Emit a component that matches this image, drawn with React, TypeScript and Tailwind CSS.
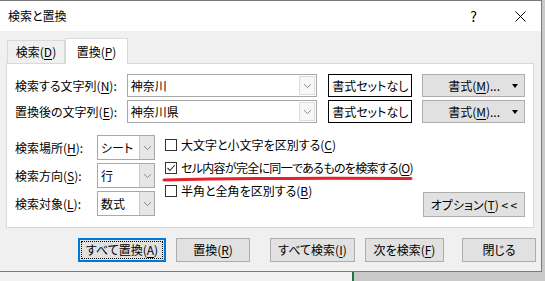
import type { ReactNode } from 'react'

// 検索と置換 dialog (Excel, Windows 10 look)

function U({ children }: { children: ReactNode }) {
  return <span className="underline underline-offset-[2px] decoration-1">{children}</span>
}

function Chevron() {
  return (
    <svg width="9" height="6" viewBox="0 0 9 6" className="text-[#8a8a8a]">
      <path d="M1 1.2 L4.5 4.6 L8 1.2" fill="none" stroke="currentColor" strokeWidth="1" />
    </svg>
  )
}

function Combo({ value }: { value: string }) {
  return (
    <div className="flex h-[23px] w-[191px] items-center border border-[#a8a8a8] bg-white">
      <span className="flex-1 pl-[3px] text-[12px]">{value}</span>
      <div className="mr-[1px] flex h-[19px] w-[16px] items-center justify-center border border-[#dcdcdc] bg-[#f7f7f7]">
        <Chevron />
      </div>
    </div>
  )
}

function Select({ value }: { value: string }) {
  return (
    <div className="flex h-[25px] w-[58px] items-center border border-[#a8a8a8] bg-white">
      <span className="flex-1 whitespace-nowrap pl-[3px] text-[12px]">{value}</span>
      <div className="flex h-full w-[15px] items-center justify-center border-l border-[#c8c8c8] bg-[#e6e6e6]">
        <Chevron />
      </div>
    </div>
  )
}

function Check({ checked, tight, children }: { checked?: boolean; tight?: boolean; children: ReactNode }) {
  return (
    <div className="flex h-[23px] items-center gap-[4px]">
      <div className="flex h-[12px] w-[12px] items-center justify-center border border-[#333] bg-white">
        {checked && (
          <svg width="10" height="10" viewBox="0 0 10 10">
            <path d="M1.5 5 L4 7.5 L8.8 2" fill="none" stroke="#333" strokeWidth="1.1" />
          </svg>
        )}
      </div>
      <span className={['whitespace-nowrap text-[12px]', tight ? 'tracking-[-0.7px]' : ''].join(' ')}>
        {children}
      </span>
    </div>
  )
}

function Btn({ w, ml, children, focus }: { w: string; ml: string; children: ReactNode; focus?: boolean }) {
  return (
    <div
      className={[
        'flex h-[24px] items-center justify-center whitespace-nowrap text-[12px]',
        w,
        ml,
        focus ? 'border-2 border-[#0078d7] bg-[#e1e1e1] p-[1px]' : 'border border-[#adadad] bg-[#e1e1e1]',
      ].join(' ')}
    >
      {focus ? (
        <div className="flex h-full w-full items-center justify-center border border-dotted border-black">
          {children}
        </div>
      ) : (
        children
      )}
    </div>
  )
}

function FormatButton() {
  return (
    <div className="relative ml-[10px] flex h-[23px] w-[103px] items-center justify-center border border-[#adadad] bg-[#e1e1e1] text-[12px]">
      <span className="pl-[1px]">
        書式(<U>M</U>)...
      </span>
      <span className="absolute right-[6px] top-[9px] h-0 w-0 border-x-[3px] border-t-[4px] border-x-transparent border-t-black" />
    </div>
  )
}

function NoFormat() {
  return (
    <div className="ml-[11px] flex h-[23px] w-[84px] items-center justify-center whitespace-nowrap border border-black text-[12px]">
      書式セットなし
    </div>
  )
}

export default function App() {
  return (
    <div className="relative h-[281px] w-[545px] overflow-hidden bg-[#c9c9c9] font-['Noto_Sans_CJK_JP','Liberation_Sans',sans-serif] text-black [font-feature-settings:'palt']">
      <div className="flex">
        {/* dialog window */}
        <div className="flex h-[272px] w-[542px] flex-col border border-l-0 border-[#7a7a7a] bg-[#f0f0f0]">
          {/* title bar */}
          <div className="flex h-[30px] items-center bg-white">
            <span className="ml-[8px] text-[12px]">検索と置換</span>
            <span className="ml-auto mr-[38px] text-[14px]">?</span>
            <svg width="11" height="11" viewBox="0 0 11 11" className="mr-[15px]">
              <path d="M0.5 0.5 L10.5 10.5 M10.5 0.5 L0.5 10.5" stroke="#000" strokeWidth="1" />
            </svg>
          </div>

          {/* tabs */}
          <div className="mt-[7px] flex h-[25px] items-end pl-[7px]">
            <div className="flex h-[23px] w-[58px] items-center justify-center border border-b-0 border-[#d9d9d9] text-[12px]">
              検索(<U>D</U>)
            </div>
            <div className="relative z-10 -mb-[1px] flex h-[26px] w-[63px] items-center justify-center border border-b-0 border-[#d9d9d9] bg-white text-[12px]">
              置換(<U>P</U>)
            </div>
          </div>

          {/* tab panel */}
          <div className="relative ml-[6px] h-[165px] w-[528px] border border-[#d9d9d9] bg-white px-[8px] pt-[10px]">
            <div className="flex h-[23px] items-center">
              <span className="w-[112px] whitespace-nowrap text-[12px]">
                検索する文字列(<U>N</U>):
              </span>
              <Combo value="神奈川" />
              <NoFormat />
              <FormatButton />
            </div>
            <div className="mt-[3px] flex h-[23px] items-center">
              <span className="w-[112px] whitespace-nowrap text-[12px]">
                置換後の文字列(<U>E</U>):
              </span>
              <Combo value="神奈川県" />
              <NoFormat />
              <FormatButton />
            </div>

            <div className="mt-[12px] grid grid-cols-[82px_58px_minmax(0,1fr)_102px] grid-rows-[25px_25px_25px] gap-y-[3px]">
              <span className="col-start-1 row-start-1 self-center text-[12px]">
                検索場所(<U>H</U>):
              </span>
              <div className="col-start-2 row-start-1">
                <Select value="シート" />
              </div>
              <span className="col-start-1 row-start-2 self-center text-[12px]">
                検索方向(<U>S</U>):
              </span>
              <div className="col-start-2 row-start-2">
                <Select value="行" />
              </div>
              <span className="col-start-1 row-start-3 self-center text-[12px]">
                検索対象(<U>L</U>):
              </span>
              <div className="col-start-2 row-start-3">
                <Select value="数式" />
              </div>

              <div className="col-start-3 row-span-3 row-start-1 -mt-[2px] ml-[10px]">
                <Check>
                  大文字と小文字を区別する(<U>C</U>)
                </Check>
                <Check checked tight>
                  セル内容が完全に同一であるものを検索する(<U>O</U>)
                </Check>
                <Check>
                  半角と全角を区別する(<U>B</U>)
                </Check>
              </div>

              <div className="col-start-4 row-start-3 mt-[1px] flex h-[25px] items-center justify-center whitespace-nowrap border border-[#adadad] bg-[#e1e1e1] text-[12px]">
                オプション(<U>T</U>)&nbsp;&lt;&thinsp;&lt;
              </div>
            </div>

            {/* red annotation underline */}
            <svg
              className="absolute left-[155px] top-[112px]"
              width="252"
              height="6"
              viewBox="0 0 252 6"
            >
              <path d="M2 4 Q 60 2.6 125 2.4 T 249 2.6" fill="none" stroke="#e8202a" strokeWidth="3" strokeLinecap="round" />
            </svg>
          </div>

          {/* bottom buttons */}
          <div className="mt-[10px] flex">
            <Btn w="w-[88px]" ml="ml-[78px]" focus>
              すべて置換(<U>A</U>)
            </Btn>
            <Btn w="w-[74px]" ml="ml-[10px]">
              置換(<U>R</U>)
            </Btn>
            <Btn w="w-[85px]" ml="ml-[20px]">
              すべて検索(<U>I</U>)
            </Btn>
            <Btn w="w-[79px]" ml="ml-[10px]">
              次を検索(<U>F</U>)
            </Btn>
            <Btn w="w-[74px]" ml="ml-[18px]">
              閉じる
            </Btn>
          </div>
        </div>
      </div>

      {/* area behind the dialog */}
      <div className="flex h-[9px]">
        <div className="w-[352px] bg-[#f2f2f2]" />
        <div className="w-[2px] bg-[#217346]" />
        <div className="flex-1 bg-[#c9c9c9]" />
      </div>
    </div>
  )
}
